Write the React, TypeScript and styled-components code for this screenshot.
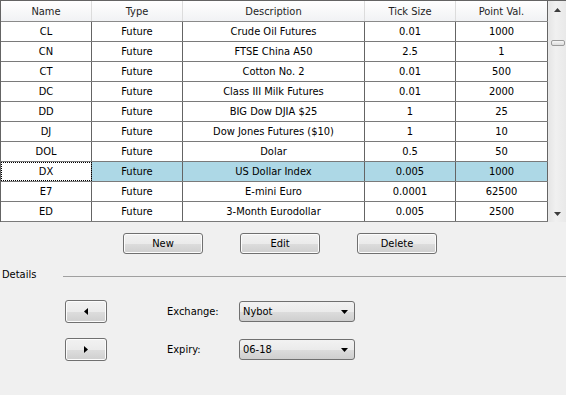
import styled, { createGlobalStyle } from 'styled-components';

const GlobalStyle = createGlobalStyle`
  html, body {
    margin: 0;
    padding: 0;
    background: #f0f0f0;
  }
  body {
    font-family: "DejaVu Sans Condensed", "DejaVu Sans", sans-serif;
    font-size: 11px;
    color: #000;
  }
`;

const Page = styled.div`
  width: 566px;
  height: 395px;
  background: #f0f0f0;
  display: flex;
  flex-direction: column;
  overflow: hidden;
`;

const TableFrame = styled.div`
  height: 222px;
  display: flex;
  border-top: 1px solid #646464;
  border-left: 1px solid #646464;
  box-sizing: border-box;
  overflow: hidden;
`;

const Grid = styled.div`
  width: 547px;
  display: flex;
  flex-direction: column;
  background: #fff;
`;

const COLS = '91px 91px 182px 91px 92px';

const HeaderRow = styled.div`
  display: grid;
  grid-template-columns: ${COLS};
  height: 21px;
  box-sizing: border-box;
  border-bottom: 1px solid #8a8a8a;
  background: linear-gradient(#ffffff, #f1f2f4);
`;

const HeaderCell = styled.div`
  display: flex;
  align-items: center;
  justify-content: center;
  border-right: 1px solid #dcdcdc;
  color: #1e1e1e;
  &:last-child {
    border-right: 1px solid #646464;
  }
`;

const Row = styled.div`
  display: grid;
  grid-template-columns: ${COLS};
  height: 20px;
  flex-shrink: 0;
  box-sizing: border-box;
  border-bottom: 1px solid #7a7a7a;
`;

const Cell = styled.div<{ $selected?: boolean; $focus?: boolean }>`
  display: flex;
  align-items: center;
  justify-content: center;
  box-sizing: border-box;
  border-right: 1px solid #646464;
  background: ${(p) => (p.$selected ? '#add8e6' : '#fff')};
  outline: ${(p) => (p.$focus ? '1px dotted #000' : 'none')};
  outline-offset: -1px;
  white-space: nowrap;
`;

const ScrollBar = styled.div`
  width: 18px;
  display: flex;
  flex-direction: column;
  align-items: center;
  background: linear-gradient(90deg, #e6e6e6, #f0f0f0 40%, #e9e9e9);
  border-left: 1px solid #e9e9e9;
  box-sizing: border-box;
`;

const ScrollArrow = styled.div`
  height: 17px;
  width: 100%;
  display: flex;
  align-items: center;
  justify-content: center;
`;

const Track = styled.div`
  flex: 1;
  width: 100%;
  display: flex;
  justify-content: center;
  padding-top: 22px;
  box-sizing: border-box;
`;

const Thumb = styled.div`
  width: 14px;
  height: 6px;
  border: 1px solid #9a9a9a;
  border-radius: 2px;
  background: linear-gradient(#f6f6f6, #dcdcdc);
  box-sizing: border-box;
`;

const ButtonBar = styled.div`
  display: flex;
  gap: 37px;
  padding-left: 123px;
  margin-top: 11px;
`;

const PushButton = styled.button<{ $w?: number; $h?: number }>`
  width: ${(p) => p.$w ?? 80}px;
  height: ${(p) => p.$h ?? 21}px;
  padding: 0;
  display: flex;
  align-items: center;
  justify-content: center;
  font: inherit;
  color: #000;
  border: 1px solid #707070;
  border-radius: 3px;
  background: linear-gradient(#f2f2f2 0%, #ebebeb 50%, #dddddd 51%, #cfcfcf 100%);
  box-shadow: inset 0 0 0 1px #fcfcfc;
`;

const GroupHeader = styled.div`
  display: flex;
  align-items: center;
  margin-top: 14px;
  padding-left: 2px;
  height: 13px;
`;

const GroupLine = styled.div`
  flex: 1;
  margin-left: 27px;
  height: 1px;
  background: #a0a0a0;
  margin-top: 3px;
`;

const DetailsGrid = styled.div`
  display: grid;
  grid-template-columns: 42px 60px 72px 116px;
  grid-auto-rows: 23px;
  row-gap: 15px;
  align-items: center;
  padding-left: 65px;
  margin-top: 19px;
`;

const Label = styled.span`
  grid-column: 3;
`;

const Combo = styled.div`
  grid-column: 4;
  height: 21px;
  display: flex;
  align-items: center;
  justify-content: space-between;
  padding: 0 6px 0 3px;
  border: 1px solid #707070;
  border-radius: 3px;
  box-sizing: border-box;
  background: linear-gradient(#f2f2f2 0%, #ebebeb 50%, #dddddd 51%, #cfcfcf 100%);
`;

const Tri = ({ dir, color = '#000' }: { dir: 'up' | 'down' | 'left' | 'right'; color?: string }) => {
  const pts = {
    up: '0,4 7,4 3.5,0',
    down: '0,0 7,0 3.5,4',
    left: '4,0 4,7 0,3.5',
    right: '0,0 0,7 4,3.5',
  }[dir];
  const horiz = dir === 'up' || dir === 'down';
  return (
    <svg width={horiz ? 7 : 4} height={horiz ? 4 : 7} viewBox={horiz ? '0 0 7 4' : '0 0 4 7'}>
      <polygon points={pts} fill={color} />
    </svg>
  );
};

const rows = [
  ['CL', 'Future', 'Crude Oil Futures', '0.01', '1000'],
  ['CN', 'Future', 'FTSE China A50', '2.5', '1'],
  ['CT', 'Future', 'Cotton No. 2', '0.01', '500'],
  ['DC', 'Future', 'Class III Milk Futures', '0.01', '2000'],
  ['DD', 'Future', 'BIG Dow DJIA $25', '1', '25'],
  ['DJ', 'Future', 'Dow Jones Futures ($10)', '1', '10'],
  ['DOL', 'Future', 'Dolar', '0.5', '50'],
  ['DX', 'Future', 'US Dollar Index', '0.005', '1000'],
  ['E7', 'Future', 'E-mini Euro', '0.0001', '62500'],
  ['ED', 'Future', '3-Month Eurodollar', '0.005', '2500'],
];

const SELECTED = 7;

export default function App() {
  return (
    <Page>
      <GlobalStyle />
      <TableFrame>
        <Grid>
          <HeaderRow>
            {['Name', 'Type', 'Description', 'Tick Size', 'Point Val.'].map((h) => (
              <HeaderCell key={h}>{h}</HeaderCell>
            ))}
          </HeaderRow>
          {rows.map((r, i) => (
            <Row key={r[0]}>
              {r.map((v, j) => (
                <Cell key={j} $selected={i === SELECTED && j > 0} $focus={i === SELECTED && j === 0}>
                  {v}
                </Cell>
              ))}
            </Row>
          ))}
        </Grid>
        <ScrollBar>
          <ScrollArrow>
            <Tri dir="up" color="#3c3c3c" />
          </ScrollArrow>
          <Track>
            <Thumb />
          </Track>
          <ScrollArrow>
            <Tri dir="down" color="#3c3c3c" />
          </ScrollArrow>
        </ScrollBar>
      </TableFrame>

      <ButtonBar>
        <PushButton>New</PushButton>
        <PushButton>Edit</PushButton>
        <PushButton>Delete</PushButton>
      </ButtonBar>

      <GroupHeader>
        Details
        <GroupLine />
      </GroupHeader>

      <DetailsGrid>
        <PushButton $w={42} $h={23}>
          <Tri dir="left" />
        </PushButton>
        <Label>Exchange:</Label>
        <Combo>
          Nybot
          <Tri dir="down" />
        </Combo>
        <PushButton $w={42} $h={23}>
          <Tri dir="right" />
        </PushButton>
        <Label>Expiry:</Label>
        <Combo>
          06-18
          <Tri dir="down" />
        </Combo>
      </DetailsGrid>
    </Page>
  );
}
